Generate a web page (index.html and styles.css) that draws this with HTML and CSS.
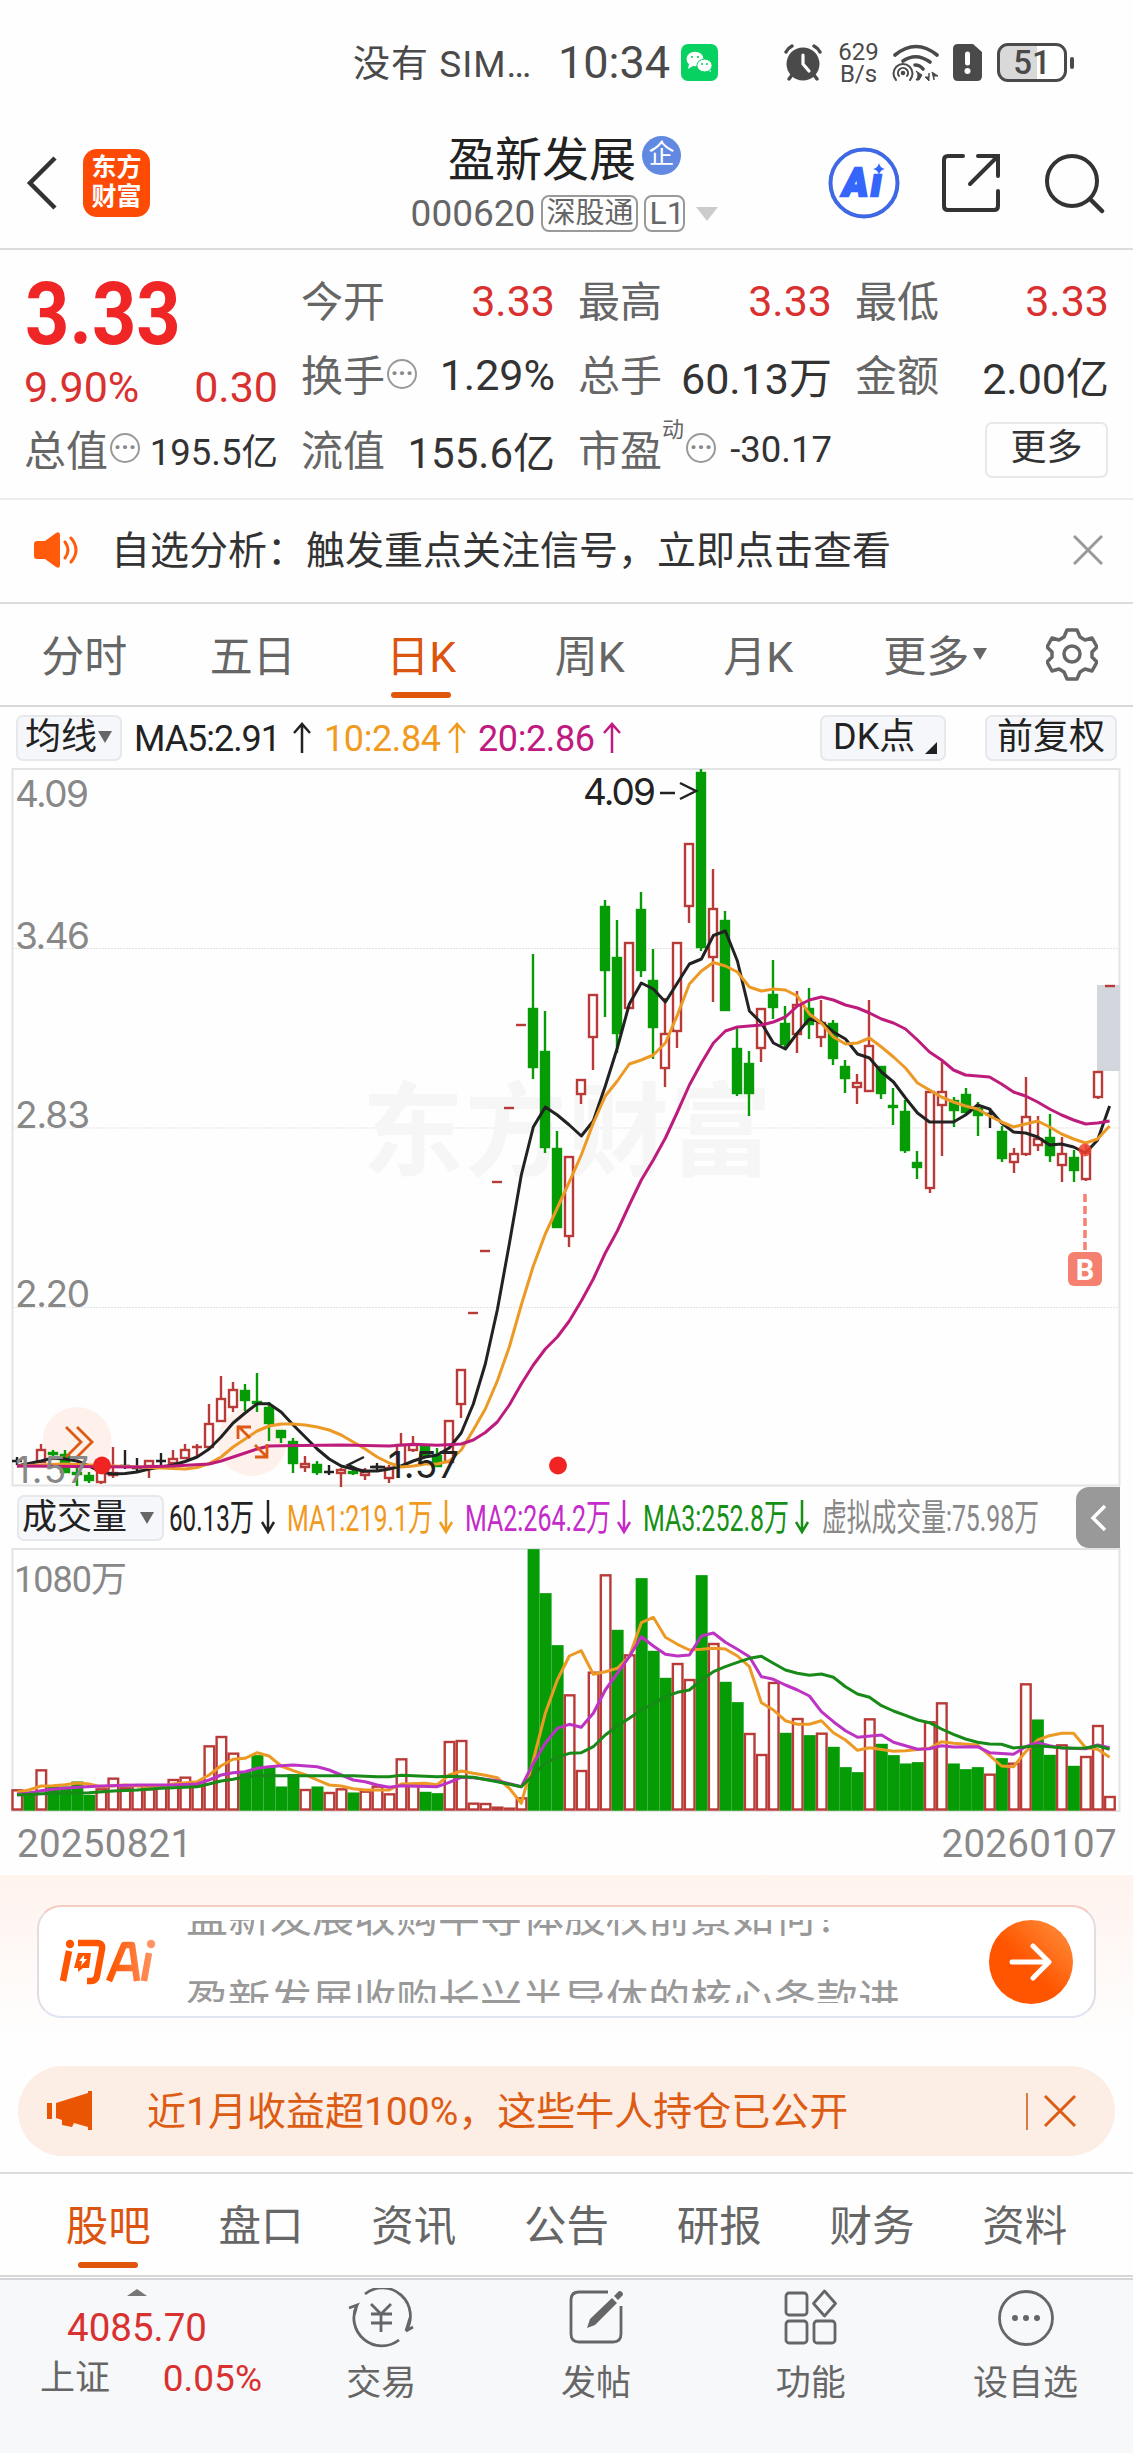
FILE: index.html
```html
<!DOCTYPE html>
<html lang="zh-CN">
  <head>
    <meta charset="utf-8">
    <title>盈新发展 000620</title>
    <link rel="stylesheet" href="styles.css">
  </head>
  <body>
    <div class="status">
      <span class="carrier">没有 SIM…</span>
      <span class="clock">10:34</span>
      <svg class="wechat" width="37" height="37" viewBox="0 0 37 37">
        <rect width="37" height="37" rx="7" fill="#07d160"/>
        <ellipse cx="14" cy="15" rx="8.5" ry="7.3" fill="#fff"/>
        <path d="M8 20l-1 5 5-3zM29 24l1 4-5-2z" fill="#fff"/>
        <ellipse cx="23.5" cy="21.5" rx="7.6" ry="6.4" fill="#fff" stroke="#07d160"/>
        <g fill="#07d160"><circle cx="11" cy="13" r="1.1"/><circle cx="17" cy="13" r="1.1"/><circle cx="21" cy="20" r="1"/><circle cx="26" cy="20" r="1"/></g>
      </svg>
      <svg class="alarm" width="38" height="38" viewBox="0 0 38 38">
        <g fill="none" stroke="#4a4a4a" stroke-width="3.4" stroke-linecap="round">
          <path d="M2 8q2-4 6-6M36 8q-2-4-6-6M8 31l-3 4M30 31l3 4"/>
        </g>
        <circle cx="19" cy="20" r="16.5" fill="#4a4a4a"/>
        <path d="M19 11v9l6 7" fill="none" stroke="#fff" stroke-width="3.2" stroke-linecap="round"/>
      </svg>
      <span class="speed">629<br>B/s</span>
      <svg class="wifi" width="48" height="38" viewBox="0 0 48 38">
        <g fill="none" stroke="#4a4a4a" stroke-width="3.6" stroke-linecap="round">
          <path d="M3 11q21-17 42 0M11 17q13-9 27 1M23 21q5 0 8 4"/>
          <path d="M4 36a9.500 9.500 0 1 1 14 0M7 32a5 5 0 1 1 8 0" stroke-width="2"/>
        </g>
        <circle cx="11" cy="29" r="2.300" fill="#4a4a4a"/>
        <path d="M24 27q4 4 0 9h3l3-5zM37 29v8l-4-4h4zM40 28l6 4h-4v4z" fill="#4a4a4a" stroke="#4a4a4a"/>
      </svg>
      <svg class="sim" width="29" height="37" viewBox="0 0 29 37">
        <path d="M5 0h15l9 8v24q0 5-5 5H5q-5 0-5-5V5q0-5 5-5z" fill="#4a4a4a"/>
        <path d="M14.500 10v9" stroke="#fff" stroke-width="5" stroke-linecap="round"/><circle cx="14.500" cy="27" r="3" fill="#fff"/>
      </svg>
      <div class="battery"><span>51</span></div>
      <i class="nub"></i>
    </div>

    <div class="header">
      <svg class="back" width="34" height="56" viewBox="0 0 34 56"><path d="M30 3L5 28l25 25" fill="none" stroke="#333" stroke-width="4.500"/></svg>
      <div class="logo">东方<br>财富</div>
      <div class="title">
        <div class="name">盈新发展<span class="qi">企</span></div>
        <div class="code">000620<span class="tag">深股通</span><span class="tag l1">L1</span><i></i></div>
      </div>
      <svg class="ai" width="72" height="72" viewBox="0 0 72 72">
        <circle cx="36" cy="36" r="33.500" fill="#fff" stroke="#3f68e4" stroke-width="4"/>
        <text x="15" y="49" font-size="38">A</text><text x="43" y="49" font-size="38">ı</text>
        <path d="M51 16q1 5 6 6-5 1-6 6-1-5-6-6 5-1 6-6z" fill="#3566fb"/>
      </svg>
      <svg class="share" width="60" height="60" viewBox="0 0 60 60">
        <path d="M22 3H7q-4 0-4 4v46q0 4 4 4h46q4 0 4-4V38M37 3h20v20M56 4L29 31" fill="none" stroke="#333" stroke-width="4" stroke-linecap="round"/>
      </svg>
      <svg class="search" width="62" height="62" viewBox="0 0 62 62">
        <circle cx="29" cy="29" r="25" fill="none" stroke="#333" stroke-width="4"/><path d="M47 47l12 12" stroke="#333" stroke-width="4.500" stroke-linecap="round"/>
      </svg>
    </div>

    <div class="stats">
      <div class="price">
        <b>3.33</b>
        <div class="cell red"><span>9.90%</span><span>0.30</span></div>
      </div>
      <div class="cell"><label>今开</label><span class="red">3.33</span></div>
      <div class="cell"><label>最高</label><span class="red">3.33</span></div>
      <div class="cell"><label>最低</label><span class="red">3.33</span></div>
      <div class="cell"><label>换手<i class="dots">···</i></label><span>1.29%</span></div>
      <div class="cell"><label>总手</label><span>60.13万</span></div>
      <div class="cell"><label>金额</label><span>2.00亿</span></div>
      <div class="cell"><label>总值<i class="dots">···</i></label><span class="small">195.5亿</span></div>
      <div class="cell"><label>流值</label><span class="mid">155.6亿</span></div>
      <div class="cell"><label>市盈<sup>动</sup><i class="dots">···</i></label><span class="small">-30.17</span></div>
      <div class="cell"><span class="more">更多</span></div>
    </div>

    <div class="notice">
      <svg class="speaker" width="46" height="36" viewBox="0 0 46 36">
        <path d="M0 12q0-3 3-3h8L22 1q4-2 4 2v30q0 4-4 2L11 27H3q-3 0-3-3z" fill="#ff5b0a"/>
        <path d="M31 10q6 8 0 16M37 6q10 12 0 24" fill="none" stroke="#ff5b0a" stroke-width="3" stroke-linecap="round"/>
      </svg>
      <span>自选分析：触发重点关注信号，立即点击查看</span>
      <svg class="close" width="30" height="30" viewBox="0 0 30 30"><path d="M1 1l28 28M29 1L1 29" stroke="#999" stroke-width="3"/></svg>
    </div>

    <div class="tabs">
      <div>分时</div>
      <div>五日</div>
      <div class="on">日K</div>
      <div>周K</div>
      <div>月K</div>
      <div>更多<i class="down"></i></div>
      <svg class="gear" width="52" height="54" viewBox="-26 -27 52 54">
        <path d="M-5-24H5L8-17 13-14 20-16 25-7 20-2V3L25 8 20 17 13 15 8 18 5 25H-5L-8 18-13 15-20 17-25 8-20 3V-2L-25-7-20-16-13-14-8-17Z" fill="none" stroke="#666" stroke-width="3.500" stroke-linejoin="round"/>
        <circle r="8" fill="none" stroke="#666" stroke-width="3.500"/>
      </svg>
    </div>

    <div class="mabar">
      <span class="chip avg">均线<i class="down"></i></span>
      <svg class="malegend" width="480" height="60" viewBox="130 707 480 60">
        <text x="134" y="751" textLength="147" fill="#222">MA5:2.91</text>
        <text x="324" y="751" textLength="117" fill="#f09a1e">10:2.84</text>
        <text x="478" y="751" textLength="117" fill="#c01a80">20:2.86</text>
        <path d="M302 753V724M294 733l8-9 8 9" stroke="#222"/>
        <path d="M457 753V724M449 733l8-9 8 9" stroke="#f09a1e"/>
        <path d="M612 753V724M604 733l8-9 8 9" stroke="#c01a80"/>
      </svg>
      <span class="chip dk">DK点<i class="corner"></i></span>
      <span class="chip fq">前复权</span>
    </div>

    <svg class="kline" width="1133" height="720" viewBox="0 767 1133 720">
      <rect class="frame" x="12.500" y="769" width="1107" height="716.500"/>
      <path class="grid" d="M12 948.500H1120M12 1128H1120M12 1307.500H1120"/>
      <text class="mark" x="362" y="1168" textLength="410">东方财富</text>
      <rect x="1097" y="985" width="23" height="86" fill="#d3d6dc"/>
      <g class="float"><circle cx="77" cy="1441.500" r="34.500"/><circle cx="252" cy="1441.500" r="34.500"/></g>
      <g id="candles"></g>
      <g id="ma"></g>
      <path class="icon" d="M66 1427l15 15-15 15M77 1427l15 15-15 15M250 1438l-12-12M238 1439v-12h13M255 1445l12 12M255 1457h12v-13"/>
      <g class="axis">
        <text x="15" y="807" textLength="74">4.09</text>
        <text x="15" y="949" textLength="75">3.46</text>
        <text x="15" y="1128" textLength="75">2.83</text>
        <text x="15" y="1307" textLength="75">2.20</text>
        <text x="15" y="1483" textLength="74">1.57</text>
      </g>
      <g class="axis dark">
        <text x="583" y="805" textLength="73">4.09</text>
        <text x="388" y="1478" textLength="71">1.57</text>
        <path d="M660 793h15M680 783l16 8-16 8M364 1457l-16 8 16 7M370 1467h15"/>
      </g>
      <circle cx="102" cy="1465.500" r="9" fill="#f12424"/><circle cx="558" cy="1465.500" r="9" fill="#f12424"/>
      <circle cx="1085" cy="1150" r="6.500" fill="#f0402c" opacity=".85"/>
      <path d="M1085 1194v58" stroke="#f5806f" stroke-width="3.500" stroke-dasharray="8 4"/>
      <rect x="1068" y="1252" width="34" height="34" rx="6" fill="#f5806f"/>
      <text class="buy" x="1085" y="1280">B</text>
    </svg>

    <div class="volbar">
      <span class="chip vol">成交量<i class="down"></i></span>
      <svg class="vollegend" width="890" height="61" viewBox="165 1487 890 61">
        <text x="169" y="1531" textLength="85" lengthAdjust="spacingAndGlyphs" fill="#222">60.13万</text>
        <text x="287" y="1531" textLength="146" lengthAdjust="spacingAndGlyphs" fill="#f09a1e">MA1:219.1万</text>
        <text x="465" y="1531" textLength="146" lengthAdjust="spacingAndGlyphs" fill="#c42bc9">MA2:264.2万</text>
        <text x="643" y="1531" textLength="146" lengthAdjust="spacingAndGlyphs" fill="#159015">MA3:252.8万</text>
        <text x="822" y="1531" textLength="217" lengthAdjust="spacingAndGlyphs" fill="#888">虚拟成交量:75.98万</text>
        <path d="M268 1500v32M262 1522l6 10 6-10" stroke="#222"/>
        <path d="M446 1500v32M440 1522l6 10 6-10" stroke="#f09a1e"/>
        <path d="M624 1500v32M618 1522l6 10 6-10" stroke="#c42bc9"/>
        <path d="M802 1500v32M796 1522l6 10 6-10" stroke="#159015"/>
      </svg>
      <div class="fold"><svg width="18" height="28" viewBox="0 0 18 28"><path d="M15 2L3 14l12 12" fill="none" stroke="#fff" stroke-width="3.500"/></svg></div>
    </div>

    <svg class="volume" width="1133" height="265" viewBox="0 1548 1133 265">
      <rect class="frame" x="12.500" y="1549" width="1107" height="262"/>
      <g id="bars"></g>
      <g id="volma"></g>
      <text x="14" y="1592" textLength="113">1080万</text>
    </svg>
    <div class="dates"><span>20250821</span><span>20260107</span></div>

    <div class="ask">
      <div class="askbox">
        <svg class="asklogo" width="100" height="50" viewBox="0 0 100 50">
          <defs><linearGradient id="lg" gradientUnits="userSpaceOnUse" x1="0" x2="100"><stop offset=".5" stop-color="#ff5500"/><stop offset="1" stop-color="#ff9a6a"/></linearGradient></defs>
          <g fill="none" stroke="url(#lg)" stroke-width="6.500" stroke-linejoin="round">
            <path d="M10 13L4 43M19 5h19q6 0 5 6l-5 27q-1 5-6 5h-4"/>
            <path d="M50 43L65 7h8l5 36M58 30h17M90 15l-5 28"/>
          </g>
          <circle cx="11" cy="6" r="4.200" fill="#ff5500"/><circle cx="92" cy="6" r="4.200" fill="#ff9468"/>
          <path d="M19 15h13l-2 15h-6l-5 4v-4h-4z" fill="#ff5500"/><path d="M25 17l-5 6h3l-1 5 6-7h-3z" fill="#fff"/>
        </svg>
        <div class="scroll">
          <p>盈新发展收购半导体股权前景如何？</p>
          <p>盈新发展收购长兴半导体的核心条款进</p>
        </div>
        <div class="go"><svg width="44" height="38" viewBox="0 0 44 38"><path d="M3 19h36M24 3l16 16-16 16" fill="none" stroke="#fff" stroke-width="5" stroke-linecap="round" stroke-linejoin="round"/></svg></div>
      </div>
    </div>

    <div class="banner">
      <svg class="horn" width="46" height="40" viewBox="0 0 46 40"><path d="M0 12h5v16H0zM9 12L41 2V0h4v39h-4v-3l-14-4-2 4-10-2v-5l-6-2z" fill="#ea5504"/></svg>
      <span>近1月收益超100%，这些牛人持仓已公开</span>
      <i class="line"></i>
      <svg class="x" width="34" height="34" viewBox="0 0 34 34"><path d="M2 2l30 30M32 2L2 32" stroke="#dc5c14" stroke-width="3"/></svg>
    </div>

    <div class="tabs sub">
      <div class="on">股吧</div>
      <div>盘口</div>
      <div>资讯</div>
      <div>公告</div>
      <div>研报</div>
      <div>财务</div>
      <div>资料</div>
    </div>

    <div class="nav">
      <div class="index">
        <i class="up"></i>
        <div class="red">4085.70</div>
        <div class="row"><span>上证</span><span class="red">0.05%</span></div>
      </div>
      <div class="item">
        <svg width="66" height="60" viewBox="-33 -30 66 60">
          <path d="M-16-24A28 28 0 0 1 25 13L32 9M25 13l4-13M18 22A28 28 0 0 1-24-13L-32-10M-24-13l-3 11M-10-14L0-4 10-14M-10-4h21M-10 5h21M0-4v18"/>
        </svg>
        交易
      </div>
      <div class="item">
        <svg width="60" height="60" viewBox="-30 -30 60 60">
          <path d="M12-26h-29q-8 0-8 8v34q0 8 8 8h34q8 0 8-8v-28"/>
          <path class="fill" d="M-9 10l3-9L16-20l5 5L-1 7zM18-22l5-5q4 0 4 4l-5 5z"/>
        </svg>
        发帖
      </div>
      <div class="item">
        <svg width="60" height="60" viewBox="-30 -30 60 60">
          <rect x="-25" y="-25" width="21" height="22" rx="3"/><rect x="-25" y="3" width="21" height="22" rx="3"/><rect x="3" y="3" width="21" height="22" rx="3"/>
          <path d="M13.500-27l11 12.500-11 12.500-11-12.500z" stroke-linejoin="round"/>
        </svg>
        功能
      </div>
      <div class="item">
        <svg width="60" height="60" viewBox="-30 -30 60 60">
          <circle r="26.500"/><g class="fill"><circle cx="-11" r="3"/><circle r="3"/><circle cx="11" r="3"/></g>
        </svg>
        设自选
      </div>
    </div>
    <script src="chart.js"></script>
  </body>
</html>
```
FILE: styles.css
```css
* {
  box-sizing: border-box;
}
body {
  margin: 0;
  width: 1133px;
  height: 2453px;
  overflow: hidden;
  background: #fefefe;
  color: #333;
  font-family: Roboto, "Noto Sans CJK SC", sans-serif;
}
svg {
  display: block;
  flex: none;
}
i {
  font-style: normal;
}
.red {
  color: #d93030;
}

/* status bar */
.status {
  height: 125px;
  padding-left: 353px;
  display: flex;
  align-items: center;
  color: #4a4a4a;
  white-space: nowrap;
}
.carrier {
  width: 205px;
  padding-bottom: 3px;
  font-size: 37px;
  letter-spacing: 1px;
}
.clock {
  width: 123px;
  font-size: 45px;
}
.alarm {
  margin-left: 66px;
}
.speed {
  margin-left: 16px;
  width: 41px;
  font-size: 24px;
  line-height: 22px;
  text-align: center;
}
.wifi {
  margin-left: 13px;
}
.sim {
  margin-left: 13px;
}
.battery {
  margin-left: 15px;
  width: 70px;
  height: 39px;
  border: 3px solid #4a4a4a;
  border-radius: 11px;
  background: linear-gradient(90deg, #d9d9d9 58%, #fff 58%);
  text-align: center;
  font-size: 33px;
  font-weight: 500;
  line-height: 33px;
}
.nub {
  width: 4px;
  height: 12px;
  margin-left: 3px;
  border-radius: 2px;
  background: #4a4a4a;
}

/* header */
.header {
  height: 125px;
  display: flex;
  align-items: center;
  border-bottom: 2px solid #dcdcdc;
  padding-bottom: 8px;
}
.back {
  margin-left: 25px;
}
.logo {
  width: 67px;
  height: 68px;
  margin-left: 24px;
  padding-top: 4px;
  border-radius: 14px;
  background: #fd4a05;
  color: #fff;
  font-size: 25px;
  font-weight: bold;
  line-height: 29px;
  text-align: center;
}
.title {
  width: 529px;
  margin-left: 151px;
  padding: 4px 2px 0 0;
}
.name {
  display: flex;
  align-items: center;
  justify-content: center;
  height: 58px;
  color: #222;
  font-size: 47px;
}
.qi {
  width: 39px;
  height: 39px;
  margin-left: 6px;
  border-radius: 50%;
  background: #6189e2;
  color: #fff;
  font-size: 26px;
  line-height: 36px;
  text-align: center;
}
.code {
  display: flex;
  align-items: center;
  justify-content: center;
  height: 58px;
  color: #666;
  font-size: 37px;
}
.tag {
  height: 37px;
  margin-left: 6px;
  padding: 0 3px;
  border: 2px solid #999;
  border-radius: 8px;
  font-size: 29px;
  line-height: 32px;
}
.l1 {
  width: 41px;
  font-size: 32px;
}
.code i {
  margin-left: 11px;
  border: 11px solid transparent;
  border-top: 14px solid #ccc;
  border-bottom: 0;
}
.ai {
  margin-left: -2px;
}
.ai text {
  fill: #3566fb;
  stroke: #3566fb;
  stroke-width: 2.5px;
  font-weight: 900;
  font-style: italic;
}
.share {
  margin-left: 41px;
}
.search {
  margin-left: 42px;
}

/* quotes */
.stats {
  height: 250px;
  padding: 14px 24px 0 25px;
  display: grid;
  grid-template-columns: repeat(4, 252px);
  grid-template-rows: repeat(3, 74.5px);
  column-gap: 25px;
  border-bottom: 2px solid #ebebeb;
}
.price {
  grid-row: span 2;
}
.price b {
  display: block;
  height: 87px;
  color: #f02525;
  font-size: 88px;
  line-height: 99px;
  transform: scaleX(.88);
  transform-origin: left;
}
.price .cell {
  height: 73px;
}
.cell {
  display: flex;
  justify-content: space-between;
  align-items: center;
  font-size: 43px;
  white-space: nowrap;
}
.cell > span {
  margin: 0 -1px;
  padding-bottom: 1px;
}
.cell label {
  display: flex;
  align-items: center;
  margin-left: -1px;
  padding-bottom: 6px;
  color: #666;
  font-size: 42px;
}
.cell .small {
  font-size: 36.5px;
}
.cell .mid {
  font-size: 42px;
}
.cell sup {
  font-size: 22px;
  align-self: flex-start;
  line-height: 26px;
}
.dots {
  width: 30px;
  height: 30px;
  margin: 2px 0 0 2px;
  border: 2px solid #999;
  border-radius: 50%;
  color: #888;
  font-size: 25px;
  font-weight: bold;
  line-height: 25px;
  text-align: center;
}
.cell .more {
  width: 123px;
  height: 56px;
  margin: 0 0 0 auto;
  border: 2px solid #e8e8e8;
  border-radius: 7px;
  font-size: 36px;
  line-height: 49px;
  text-align: center;
}

.notice {
  height: 104px;
  padding: 0 30px 2px 34px;
  display: flex;
  align-items: center;
  border-bottom: 2px solid #dcdcdc;
  font-size: 39px;
}
.notice span {
  margin-left: 31px;
  padding-bottom: 6px;
}
.close {
  margin-left: auto;
}

/* tabs */
.tabs {
  height: 103px;
  display: flex;
  border-bottom: 2px solid #d8d8d8;
  color: #666;
  font-size: 43px;
  line-height: 106px;
}
.tabs > div {
  position: relative;
  width: 168.5px;
  text-align: center;
}
.tabs .on {
  color: #dc5510;
}
.tabs .on::after {
  content: "";
  position: absolute;
  left: 50%;
  bottom: 7px;
  width: 60px;
  height: 6px;
  margin-left: -30px;
  border-radius: 3px;
  background: #e0560a;
}
.down {
  display: inline-block;
  margin-left: 5px;
  border: 7px solid transparent;
  border-top: 12px solid #666;
  border-bottom: 0;
}
.tabs .down {
  margin: 0 -17px 0 4px;
  vertical-align: 12px;
}
.gear {
  margin: 23px 0 0 35px;
}

.chip {
  height: 46px;
  border: 2px solid #e6e8ec;
  border-radius: 7px;
  background: #f6f7fa;
  color: #222;
  font-size: 36px;
  line-height: 41px;
  white-space: nowrap;
}
.mabar {
  height: 60px;
  padding-top: 8px;
  display: flex;
}
.avg {
  width: 106px;
  margin-left: 16px;
  padding-left: 7px;
}
.avg .down {
  margin-left: 1px;
  vertical-align: 6px;
}
.malegend {
  margin: -8px 0 0 8px;
  overflow: visible;
  font-size: 36px;
}
.malegend path, .vollegend path {
  fill: none;
  stroke-width: 2.5px;
}
.dk {
  width: 126px;
  margin-left: 210px;
  padding-left: 11px;
}
.corner {
  display: inline-block;
  margin-left: 10px;
  vertical-align: -5px;
  border-left: 12px solid transparent;
  border-bottom: 12px solid #222;
}
.fq {
  width: 132px;
  margin-left: 39px;
  padding-left: 10px;
}

/* charts */
.frame {
  fill: none;
  stroke: #e4e4e4;
  stroke-width: 2px;
}
.grid {
  stroke: #e3e3e3;
  stroke-dasharray: 2 1;
}
.mark {
  fill: #f6f6f6;
  font-size: 102px;
  font-weight: bold;
}
.r {
  fill: #fefefe;
  stroke: #b93b38;
  stroke-width: 2.4px;
}
.g {
  fill: #059c05;
  stroke: #059c05;
  stroke-width: 2.4px;
}
.k {
  stroke: #222;
  stroke-width: 2.4px;
}
polyline {
  fill: none;
  stroke-width: 3px;
  stroke-linejoin: round;
}
.float {
  fill: #fef0ea;
}
.icon {
  fill: none;
  stroke: #dd5a14;
  stroke-width: 2.8px;
}
.axis {
  fill: #888;
  font-family: Inter, sans-serif;
  font-size: 37px;
}
.dark {
  fill: #222;
}
.dark path {
  fill: none;
  stroke: #222;
  stroke-width: 2.5px;
}
.buy {
  fill: #fff;
  font-size: 29px;
  font-weight: bold;
  text-anchor: middle;
}
.volbar {
  height: 61px;
  display: flex;
}
.vol {
  width: 147px;
  margin: 8px 0 0 17px;
  padding-left: 3px;
  font-size: 35px;
}
.vol .down {
  margin-left: 13px;
  vertical-align: 5px;
}
.vollegend {
  margin-left: 1px;
  overflow: visible;
  font-size: 37px;
}
.fold {
  width: 44px;
  height: 61px;
  margin-left: 21px;
  padding: 17px 0 0 14px;
  border-radius: 13px 0 0 13px;
  background: #999;
}
.volume text {
  fill: #888;
  font-size: 36px;
}
.dates {
  height: 62px;
  padding: 8px 16px 0 17px;
  display: flex;
  justify-content: space-between;
  color: #888;
  font-size: 38.5px;
  letter-spacing: .3px;
}

/* ask ai */
.ask {
  height: 191px;
  padding: 30px 37px 0;
  background: linear-gradient(#fff3ee, #fefefe 85%);
}
.askbox {
  height: 113px;
  display: flex;
  align-items: center;
  border: 2px solid;
  border-color: #f3cbc2 #e5dce3 #dfe6f2;
  border-radius: 24px;
  background: #fff;
}
.asklogo {
  margin: 2px 0 0 20px;
}
.scroll {
  width: 803px;
  height: 83px;
  margin-left: 27px;
  overflow: hidden;
  color: #999;
  font-size: 42px;
  line-height: 83px;
}
.scroll p {
  margin: 0;
}
.scroll p:first-child {
  margin-top: -44px;
}
.go {
  width: 84px;
  height: 84px;
  padding: 23px 20px;
  border-radius: 50%;
  background: linear-gradient(45deg, #ff5500 45%, #ff9440);
}

.banner {
  height: 90px;
  margin: 0 18px;
  padding: 0 38px 0 29px;
  display: flex;
  align-items: center;
  border-radius: 45px;
  background: #fcede5;
  color: #dc5c14;
  font-size: 39px;
}
.banner span {
  margin-left: 54px;
  padding-bottom: 6px;
}
.line {
  width: 2px;
  height: 37px;
  margin: 0 15px 0 auto;
  background: #dc7a44;
}

.sub {
  height: 105px;
  margin-top: 16px;
  padding: 0 32px;
  border-top: 2px solid #dcdcdc;
  font-size: 42.5px;
  line-height: 105px;
}
.sub > div {
  flex: 1;
}

.nav {
  height: 175px;
  margin-top: 1px;
  display: flex;
  border-top: 2px solid #d4d6da;
  background: #f7f8fa;
  color: #666;
}
.index {
  width: 274px;
  font-size: 38.5px;
  text-align: center;
}
.index > .red {
  line-height: 64px;
}
.up {
  display: block;
  width: 20px;
  margin: 9px auto 0;
  border: 10px solid transparent;
  border-bottom: 7px solid #777;
  border-top: 0;
}
.row {
  padding: 0 12px 0 40px;
  display: flex;
  justify-content: space-between;
  font-size: 37px;
  line-height: 38px;
}
.row span:first-child {
  font-size: 35px;
}
.item {
  flex: 1;
  padding-top: 8px;
  font-size: 35px;
  line-height: 71px;
  text-align: center;
}
.item svg {
  margin: 0 auto;
  fill: none;
  stroke: #666;
  stroke-width: 2.8px;
}
.item .fill {
  fill: #666;
  stroke: none;
}
```
FILE: chart.js
```js
// day candles: type (r up, g down, k flat), high, body top, body bottom, low
const days = `k 1457 1461 1461 1465|k 1463 1465 1465 1467|r 1444 1450 1462 1463|g 1450 1453 1454 1457|g 1450 1455 1472 1473|g 1468 1473 1474 1486|g 1472 1476 1480 1483|r 1466 1472 1482 1484|r 1447 1473 1475 1478|k 1450 1466 1466 1469|k 1458 1468 1468 1472|r 1460 1461 1466 1478|k 1453 1461 1461 1465|r 1450 1459 1463 1464|r 1444 1450 1458 1459|r 1444 1447 1447 1457|r 1404 1424 1447 1447|r 1376 1399 1421 1421|r 1382 1390 1407 1412|g 1384 1391 1400 1411|g 1373 1402 1403 1412|g 1402 1408 1423 1441|g 1430 1431 1437 1443|g 1438 1442 1463 1473|r 1456 1464 1467 1472|g 1461 1465 1472 1475|k 1465 1472 1472 1475|r 1468 1470 1473 1487|g 1468 1472 1473 1475|r 1468 1472 1475 1480|k 1463 1467 1467 1470|r 1465 1468 1478 1483|r 1433 1445 1466 1467|r 1436 1445 1450 1452|g 1444 1446 1455 1457|g 1448 1456 1466 1466|r 1421 1421 1462 1463|r 1370 1370 1404 1418|r 1313 1313 1313 1313|r 1251 1251 1251 1251|r 1182 1182 1182 1182|r 1108 1108 1108 1108|r 1025 1025 1025 1025|g 954 1009 1067 1079|g 1011 1052 1147 1153|g 1131 1149 1227 1227|r 1157 1157 1236 1247|r 1080 1080 1094 1104|r 995 995 1037 1070|g 900 907 970 1017|g 920 958 1033 1053|r 943 943 1008 1008|g 892 910 970 977|g 949 981 1027 1059|r 998 1034 1068 1087|r 943 943 1031 1048|r 844 844 906 923|g 769 773 947 951|r 869 909 957 1002|g 911 921 1010 1010|g 1028 1049 1093 1096|g 1051 1064 1093 1116|r 1009 1009 1048 1062|g 960 995 1007 1019|g 1006 1024 1044 1048|r 991 1005 1034 1053|g 988 1009 1024 1039|r 1000 1023 1037 1047|g 1020 1024 1058 1065|g 1060 1067 1078 1093|r 1074 1083 1087 1104|r 1000 1046 1091 1091|g 1066 1067 1093 1099|g 1088 1106 1107 1125|g 1100 1112 1150 1153|g 1151 1163 1167 1179|r 1091 1092 1188 1193|r 1062 1092 1105 1156|g 1097 1101 1110 1127|g 1088 1095 1112 1113|g 1102 1109 1115 1136|k 1108 1114 1114 1128|g 1126 1132 1158 1162|r 1148 1154 1162 1173|r 1077 1117 1154 1156|r 1116 1139 1145 1151|g 1114 1138 1155 1162|r 1137 1154 1165 1182|g 1150 1158 1170 1182|r 1145 1152 1179 1181|r 1071 1072 1097 1099|r 986 986 986 986`;

const ma5 = "0 1466 2 1461 3 1458 4 1459 5 1461 6 1466 7 1472 8 1474 9 1473.5 10 1472 11 1469 12 1467 13 1465 14 1461.5 15 1457 16 1449 17 1437 18 1423 19 1413 20 1403.7 21 1403.7 22 1412 23 1425 24 1437 25 1449 26 1459 27 1466 28 1469 29 1471 30 1471 31 1469 32 1466 33 1461 34 1457 35 1455 36 1448 37 1433 38 1404 39 1364 40 1310 41 1244 42 1175 43 1127 44 1107 45 1115 46 1125 47 1136 48 1121 49 1086 50 1048 51 1004 52 983 53 989 54 1002 55 983 56 964 57 959 58 935.5 59 931 60 961 61 1011 62 1023 63 1043 64 1049 65 1033 66 1019 67 1022 68 1032 69 1039 70 1054 71 1058 72 1072 73 1082 74 1098 75 1113 76 1122 78 1122 79 1115 80 1105 81 1109 82 1123 83 1132 84 1133 85 1137 86 1145 87 1144 88 1147 89 1153 90 1140 91 1106";
const ma10 = "0 1466 2 1465 4 1464 8 1466 12 1468 14 1469 15 1467.5 16 1463.5 17 1457 18 1447 19 1439 20 1431 21 1426 22 1424 23 1424 24 1425 25 1427 26 1430 27 1435 28 1442 29 1449 30 1457 31 1463 32 1467 33 1466 34 1464 35 1464 36 1461 37 1450 38 1430 39 1409 40 1381 41 1347 42 1305 43 1266 44 1234 45 1208 46 1182 47 1155 48 1123 49 1096 50 1081 51 1064 52 1060 53 1055 54 1043 55 1015 56 984 57 971 58 962.5 59 966 60 972 61 987 62 991 63 989 64 990 65 996 66 1014 67 1023 68 1037 69 1044 70 1043 71 1038 72 1047 73 1057 74 1068 75 1083 76 1090 77 1097 78 1102 79 1106 80 1109 81 1116 82 1122 83 1127 84 1124 85 1121 86 1127 87 1134 88 1139 89 1143 90 1139 91 1126";
const ma20 = "0 1466 10 1467 13 1466 16 1464 17 1461 18 1457 19 1453 20 1449 21 1446 22 1445.7 27 1445 31 1446 33 1444.3 35 1445.3 37 1444 38 1440 39 1432.5 40 1422 41 1405 42 1384 43 1365 44 1349 45 1337 46 1321 47 1301 48 1279 49 1253 50 1231 51 1205 52 1180 53 1160 54 1138 55 1112 56 1085 57 1063 58 1043 59 1031 60 1027 61 1026 62 1025 63 1022 64 1017 65 1006 66 1000 67 997 68 1000 69 1005 70 1008 71 1013 72 1019 73 1023 74 1029 75 1040 76 1052 77 1060 78 1070 79 1075 80 1076 81 1077 82 1084 83 1092 84 1096 85 1102 86 1109 87 1115 88 1120 89 1124 90 1123 91 1121";

// volume, three units per pixel
const vols = "928 935 868 920 920 905 945 925 893 922 915 925 920 897 890 915 796 768 818 875 826 860 920 883 927 920 936 925 938 932 917 940 835 915 936 940 783 780 968 969 980 983 952 208 340 496 643 870 575 283 450 523 295 513 594 549 597 286 489 606 667 759 822 606 759 714 766 758 801 862 877 715 792 826 851 847 724 667 851 868 862 881 835 848 610 719 825 793 858 828 735 948".split(" ");
const volTypes = "rgrggggrrrrrrrrrrrrggggg" + "rgrrgrrrrrggrrrrrrr" + "gggrrrrgrggg" + "rrgrggrrrgrgrgggrggggrrgggrgrrggrgrrr";
const v1 = "0 937 1 930 2 918 3 917 4 914 5 909 6 912 7 920 9 915 11 920 12 920 13 912 15 905 16 885 17 857 18 838 19 835 20 818 21 828 22 858 23 872 24 884 25 900 26 915 27 918 28 926 29 930 31 930 32 912 34 910 35 914 36 885 37 873 38 880 39 886 40 893 41 925 42 970 43 840 44 700 45 600 46 528 47 512 48 583 49 575 50 565 51 530 52 428 53 412 54 472 55 493 56 510 57 508 58 505 59 507 60 528 61 560 62 668 63 690 64 722 65 733 66 733 67 722 68 758 69 780 70 811 71 803 73 814 74 812 76 805 77 785 78 790 80 795 81 826 82 858 83 860 84 815 85 780 86 767 87 760 88 760 89 803 90 808 91 832";
const v2 = "0 943 1 940 2 932 3 928 5 922 7 918 10 915 13 915 15 912 16 900 17 885 18 878 19 875 20 865 21 860 22 857 23 855 25 860 26 870 27 885 28 900 29 905 30 915 31 922 32 917 35 920 36 907 37 892 38 893 40 902 42 920 43 850 44 790 45 745 46 733 47 742 48 700 49 630 50 580 51 530 52 470 53 498 54 523 55 528 56 525 57 468 58 459 59 487 60 508 61 530 62 590 63 598 64 615 65 630 66 648 67 695 68 725 69 752 70 772 72 765 73 787 74 797 75 808 76 806 77 797 78 801 80 800 81 818 83 823 84 800 85 788 86 797 87 804 89 806 90 795 91 803";
const v3 = "0 945 3 940 6 938 8 933 10 930 12 925 15 920 16 912 17 903 18 898 19 890 20 887 28 887 30 890 31 890 32 886 35 890 36 889 38 892 40 905 42 920 43 885 44 850 45 832 46 820 47 818 48 800 49 765 50 738 51 715 52 690 53 672 54 650 55 637 56 630 57 600 58 575 59 560 60 547 61 535 62 529 63 550 64 570 65 580 66 586 67 582 68 592 69 620 70 642 71 652 72 677 73 693 74 706 75 720 76 728 77 747 78 763 79 777 80 787 81 792 82 793 83 804 85 797 87 803 88 805 89 804 90 797 91 808";

const x = i => 17 + i * 12.0066;
const volY = v => 1480 + v / 3;

function line(text, color, toY) {
  const n = text.split(" ").map(Number);
  let pts = "";
  for (let i = 0; i < n.length; i += 2) {
    pts += x(n[i]).toFixed(1) + "," + toY(n[i + 1]).toFixed(1) + " ";
  }
  return `<polyline points="${pts}" stroke="${color}"/>`;
}

let out = "";
days.split("|").forEach((d, i) => {
  const [t, hi, top, bot, lo] = d.split(" ");
  const cx = Math.round(x(i));
  if (top === bot) {
    out += `<path class="${t}" d="M${cx - 5} ${top}h10M${cx} ${hi}V${lo}"/>`;
    return;
  }
  out += `<path class="${t}" d="M${cx} ${hi}V${top}M${cx} ${bot}V${lo}"/>`;
  out += `<rect class="${t}" x="${cx - 4}" y="${top}" width="8" height="${bot - top}"/>`;
});
document.getElementById("candles").innerHTML = out;

const same = y => y;
document.getElementById("ma").innerHTML =
  line(ma5, "#222", same) + line(ma10, "#ec9a25", same) + line(ma20, "#bd1c7c", same);

out = "";
vols.forEach((v, i) => {
  const y = volY(v) + 1;
  out += `<rect class="${volTypes[i]}" x="${x(i) - 4.500}" y="${y}" width="9.600" height="${1809.500 - y}"/>`;
});
document.getElementById("bars").innerHTML = out;
document.getElementById("volma").innerHTML =
  line(v1, "#ec9a25", volY) + line(v2, "#bd33c4", volY) + line(v3, "#178a17", volY);
```
